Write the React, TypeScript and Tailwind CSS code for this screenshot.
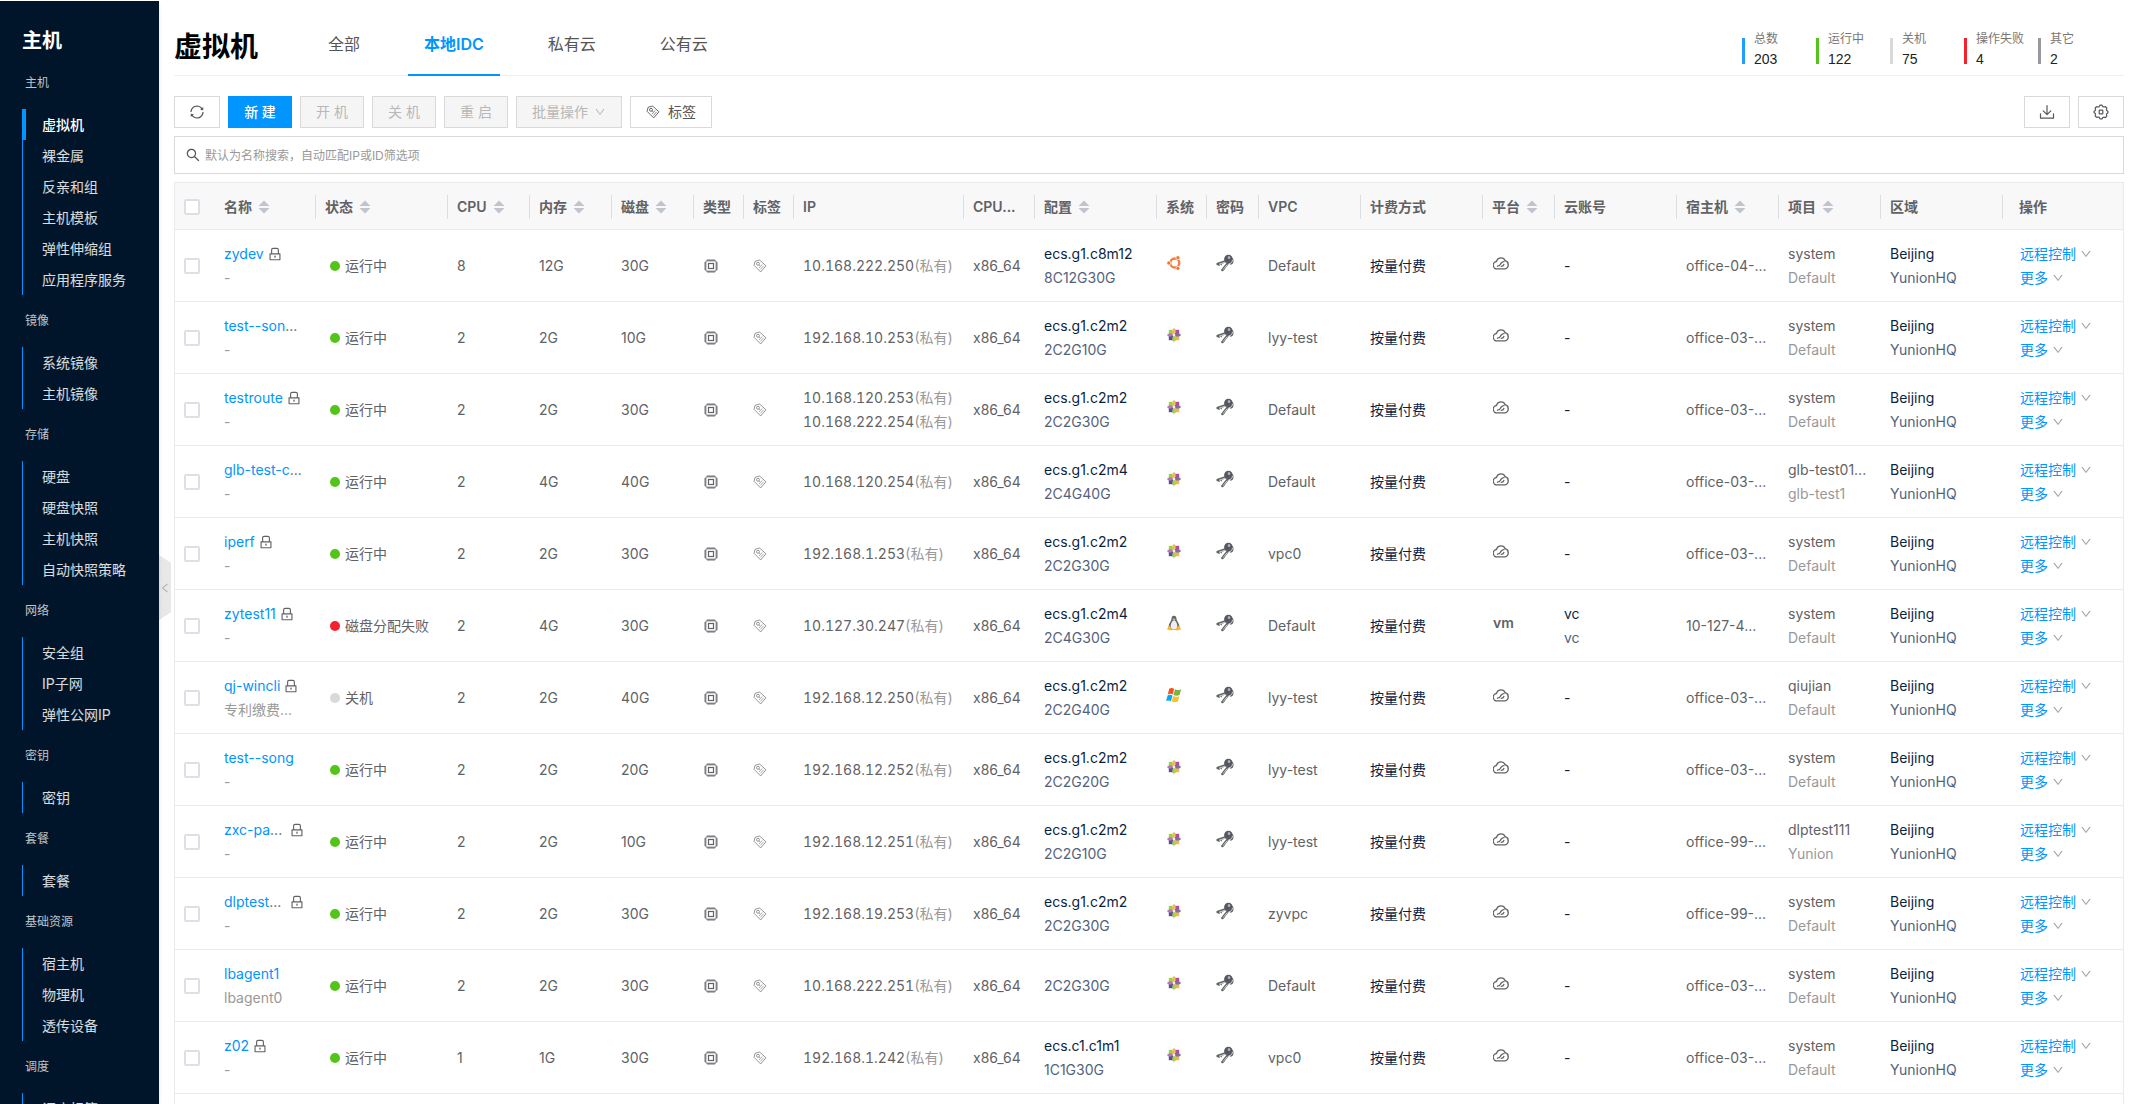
import React from "react";
import { AiOutlineDown, AiOutlineLeft, AiOutlineLock, AiOutlineSearch, AiOutlineSync } from "react-icons/ai";

type Group = { label: string; items: string[] };

const groups: Group[] = [
  { label: "主机", items: ["虚拟机", "裸金属", "反亲和组", "主机模板", "弹性伸缩组", "应用程序服务"] },
  { label: "镜像", items: ["系统镜像", "主机镜像"] },
  { label: "存储", items: ["硬盘", "硬盘快照", "主机快照", "自动快照策略"] },
  { label: "网络", items: ["安全组", "IP子网", "弹性公网IP"] },
  { label: "密钥", items: ["密钥"] },
  { label: "套餐", items: ["套餐"] },
  { label: "基础资源", items: ["宿主机", "物理机", "透传设备"] },
  { label: "调度", items: ["调度标签"] },
];

const stats = [
  { label: "总数", value: 203, bar: "bg-[#1e9fff]" },
  { label: "运行中", value: 122, bar: "bg-[#52c41a]" },
  { label: "关机", value: 75, bar: "bg-[#d9d9d9]" },
  { label: "操作失败", value: 4, bar: "bg-[#f5222d]" },
  { label: "其它", value: 2, bar: "bg-[#98989e]" },
];

type Column = { title: string; width: string; sort?: boolean };

const columns: Column[] = [
  { title: "名称", width: "w-[101px]", sort: true },
  { title: "状态", width: "w-[132px]", sort: true },
  { title: "CPU", width: "w-[82px]", sort: true },
  { title: "内存", width: "w-[82px]", sort: true },
  { title: "磁盘", width: "w-[82px]", sort: true },
  { title: "类型", width: "w-[50px]" },
  { title: "标签", width: "w-[50px]" },
  { title: "IP", width: "w-[170px]" },
  { title: "CPU...", width: "w-[71px]" },
  { title: "配置", width: "w-[122px]", sort: true },
  { title: "系统", width: "w-[50px]" },
  { title: "密码", width: "w-[52px]" },
  { title: "VPC", width: "w-[102px]" },
  { title: "计费方式", width: "w-[122px]" },
  { title: "平台", width: "w-[72px]", sort: true },
  { title: "云账号", width: "w-[122px]" },
  { title: "宿主机", width: "w-[102px]", sort: true },
  { title: "项目", width: "w-[102px]", sort: true },
  { title: "区域", width: "w-[122px]" },
];

type Os = "ubuntu" | "centos" | "linux" | "windows";
type State = "on" | "off" | "fail";
type Vm = {
  name: string;
  locked: boolean;
  note: string;
  state: State;
  cpu: number;
  mem: string;
  disk: string;
  ips: string[];
  sku: string;
  os: Os;
  vpc: string;
  account?: string;
  host: string;
  project: string;
  domain: string;
};

const vms: Vm[] = [
  { name: "zydev", locked: true, note: "-", state: "on", cpu: 8, mem: "12G", disk: "30G", ips: ["10.168.222.250"], sku: "ecs.g1.c8m12", os: "ubuntu", vpc: "Default", host: "office-04-...", project: "system", domain: "Default" },
  { name: "test--son...", locked: false, note: "-", state: "on", cpu: 2, mem: "2G", disk: "10G", ips: ["192.168.10.253"], sku: "ecs.g1.c2m2", os: "centos", vpc: "lyy-test", host: "office-03-...", project: "system", domain: "Default" },
  { name: "testroute", locked: true, note: "-", state: "on", cpu: 2, mem: "2G", disk: "30G", ips: ["10.168.120.253", "10.168.222.254"], sku: "ecs.g1.c2m2", os: "centos", vpc: "Default", host: "office-03-...", project: "system", domain: "Default" },
  { name: "glb-test-c...", locked: false, note: "-", state: "on", cpu: 2, mem: "4G", disk: "40G", ips: ["10.168.120.254"], sku: "ecs.g1.c2m4", os: "centos", vpc: "Default", host: "office-03-...", project: "glb-test01...", domain: "glb-test1" },
  { name: "iperf", locked: true, note: "-", state: "on", cpu: 2, mem: "2G", disk: "30G", ips: ["192.168.1.253"], sku: "ecs.g1.c2m2", os: "centos", vpc: "vpc0", host: "office-03-...", project: "system", domain: "Default" },
  { name: "zytest11", locked: true, note: "-", state: "fail", cpu: 2, mem: "4G", disk: "30G", ips: ["10.127.30.247"], sku: "ecs.g1.c2m4", os: "linux", vpc: "Default", account: "vc", host: "10-127-4...", project: "system", domain: "Default" },
  { name: "qj-wincli", locked: true, note: "专利缴费...", state: "off", cpu: 2, mem: "2G", disk: "40G", ips: ["192.168.12.250"], sku: "ecs.g1.c2m2", os: "windows", vpc: "lyy-test", host: "office-03-...", project: "qiujian", domain: "Default" },
  { name: "test--song", locked: false, note: "-", state: "on", cpu: 2, mem: "2G", disk: "20G", ips: ["192.168.12.252"], sku: "ecs.g1.c2m2", os: "centos", vpc: "lyy-test", host: "office-03-...", project: "system", domain: "Default" },
  { name: "zxc-pa...", locked: true, note: "-", state: "on", cpu: 2, mem: "2G", disk: "10G", ips: ["192.168.12.251"], sku: "ecs.g1.c2m2", os: "centos", vpc: "lyy-test", host: "office-99-...", project: "dlptest111", domain: "Yunion" },
  { name: "dlptest...", locked: true, note: "-", state: "on", cpu: 2, mem: "2G", disk: "30G", ips: ["192.168.19.253"], sku: "ecs.g1.c2m2", os: "centos", vpc: "zyvpc", host: "office-99-...", project: "system", domain: "Default" },
  { name: "lbagent1", locked: false, note: "lbagent0", state: "on", cpu: 2, mem: "2G", disk: "30G", ips: ["10.168.222.251"], sku: "", os: "centos", vpc: "Default", host: "office-03-...", project: "system", domain: "Default" },
  { name: "z02", locked: true, note: "-", state: "on", cpu: 1, mem: "1G", disk: "30G", ips: ["192.168.1.242"], sku: "ecs.c1.c1m1", os: "centos", vpc: "vpc0", host: "office-03-...", project: "system", domain: "Default" },
];

const states: Record<State, { text: string; dot: string }> = {
  on: { text: "运行中", dot: "bg-[#52c41a]" },
  off: { text: "关机", dot: "bg-[#d9d9d9]" },
  fail: { text: "磁盘分配失败", dot: "bg-[#f5222d]" },
};

function TagIcon({ className }: { className: string }) {
  return (
    <svg viewBox="0 0 16 16" fill="none" stroke="currentColor" strokeLinejoin="round" className={className} aria-hidden="true">
      <path d="M1.2 7.2 2.4 2.6 7.6 1.2l7.2 6.6-6 7z" />
      <circle cx="5.7" cy="5.5" r="1.7" />
      <path d="m6.8 10.4 3.8-4.2M8.4 12l3.8-4.2" strokeWidth=".8" />
      <path d="M6.9 6.7 8.2 8" strokeWidth=".8" />
    </svg>
  );
}

function ChipIcon() {
  return (
    <svg viewBox="0 0 16 16" fill="none" stroke="currentColor" className="size-4" aria-hidden="true">
      <rect x="2.8" y="2.8" width="10.4" height="10.4" rx="1" />
      <rect x="5.5" y="5.5" width="5" height="5" strokeWidth="1.2" />
      <path d="M5 1v1.8M7 1v1.8M9 1v1.8M11 1v1.8M5 13.2V15M7 13.2V15M9 13.2V15M11 13.2V15M1 5h1.8M1 7h1.8M1 9h1.8M1 11h1.8M13.2 5H15M13.2 7H15M13.2 9H15M13.2 11H15" strokeWidth=".9" />
    </svg>
  );
}

function KeysIcon() {
  return (
    <svg viewBox="0 0 18 18" className="size-[18px]" aria-hidden="true">
      <path d="M10 7.2 1.6 10M12 9 6.4 16" stroke="#606266" strokeWidth="2.4" strokeLinecap="round" />
      <path d="M3 10v2M5.2 9.2v2M7.2 13.8l1.8 1.4M5.8 15.4l1.6 1.2" stroke="#606266" strokeWidth="1.2" />
      <path d="M9.6 8 3 10.2M11.2 10.6 7 15.8" stroke="#fff" strokeWidth=".7" />
      <path d="M12.500 8.500c1 3 4 2.600 4.700 0s.2-3.400-.8-4.600z" fill="#606266" />
      <circle cx="12.4" cy="5" r="4.300" fill="#55585e" />
      <circle cx="13" cy="3.600" r="1.300" fill="#b9bbbf" />
      <path d="M12.800 9.700c2 0 3.600-1.600 3.700-4" stroke="#fff" strokeWidth=".7" fill="none" />
    </svg>
  );
}

function CloudIcon() {
  return (
    <svg viewBox="0 0 16 14" fill="none" stroke="#606266" strokeWidth="1.300" strokeLinecap="round" strokeLinejoin="round" className="h-3.5 w-4" aria-hidden="true">
      <path d="M4.400 12.900A3.700 3.700 0 0 1 3.500 5.500 4.500 4.500 0 0 1 12.100 4.700a4.200 4.200 0 0 1-.3 8.200H4.400z" />
      <path d="M4.400 10.200c2.200 0 2.600-1.200 3.200-2.300.7-1.300 1.500-2.400 3.300-2.300M8.200 10.300c1.600 0 2.300-.7 2.700-1.800" />
    </svg>
  );
}

function OsIcon({ os }: { os: Os }) {
  if (os === "ubuntu") {
    return (
      <svg viewBox="0 0 16 16" className="size-4" role="img" aria-label="Ubuntu">
        <circle cx="8.800" cy="8" r="4.500" fill="none" stroke="#f47b3c" strokeWidth="2.300" />
        <g fill="#f37329" stroke="#fff" strokeWidth=".7">
          <circle cx="2.800" cy="8" r="2" />
          <circle cx="11.900" cy="2.700" r="2" />
          <circle cx="11.900" cy="13.300" r="2" />
        </g>
      </svg>
    );
  }
  if (os === "linux") {
    return (
      <svg viewBox="0 0 16 16" className="size-4" role="img" aria-label="Linux">
        <path d="M8 .8c-1.900 0-2.600 1.400-2.500 3.300.1 1.800-2.900 4.400-2.900 7.400 0 2.200 2.400 3.300 5.400 3.300s5.400-1.100 5.400-3.300c0-3-3-5.600-2.900-7.400C10.600 2.200 9.900.8 8 .8z" fill="#5f6469" />
        <path d="M8 5.200c-1.600 0-3.400 3.400-3.400 5.900S6 14.600 8 14.600s3.400-1 3.400-3.500S9.600 5.200 8 5.200z" fill="#eceff1" />
        <path d="M6.400 4.200 8 3.300l1.600.9L8 5.500z" fill="#f5b921" />
        <path d="M1 14.200 3 10.600l3.300 3.200c.2 1-.6 1.800-1.600 1.600zM15 14.200 13 10.600l-3.300 3.200c-.2 1 .6 1.800 1.600 1.600z" fill="#f9b52b" />
      </svg>
    );
  }
  if (os === "windows") {
    return (
      <svg viewBox="0 0 16 16" className="size-4" role="img" aria-label="Windows">
        <path d="M3.200 1.700c1.700-.9 3.300-.9 4.900.1L6.700 7.600c-1.600-1-3.200-1-4.900-.1z" fill="#f4511e" />
        <path d="M8.900 2.300c1.700 1 4 1 6.200-.1l-1.500 5.900c-2 1-4.300 1-6.100 0z" fill="#7cb342" />
        <path d="M1.600 8.400c1.600-.9 3.300-.9 4.900.1L5 14.200c-1.600-1-3.300-1-4.900-.1z" fill="#03a9f4" />
        <path d="M7.200 9c1.700 1 4.100 1 6.200-.1L12 14.600c-2.100 1-4.500 1-6.200 0z" fill="#fbc02d" />
      </svg>
    );
  }
  return (
    <svg viewBox="0 0 16 16" className="size-4" role="img" aria-label="CentOS">
      <path d="M2.800 2.800h4.500v4.500H2.800z" fill="#9dd04a" />
      <path d="M8.700 2.800h4.500v4.500H8.700z" fill="#a9509a" />
      <path d="M2.800 8.700h4.500v4.500H2.800z" fill="#51509a" />
      <path d="M8.700 8.700h4.500v4.500H8.700z" fill="#f5b04a" />
      <path d="m8 .8 1.600 2v3L8 7.300 6.400 5.800v-3z" fill="#f0c060" />
      <path d="m15.200 8-2-1.600h-3L8.700 8l1.500 1.600h3z" fill="#7d6fae" />
      <path d="m8 15.200-1.600-2v-3L8 8.700l1.600 1.500v3z" fill="#a8d050" />
      <path d="m.8 8 2-1.600h3L7.300 8 5.800 9.600h-3z" fill="#b878ab" />
    </svg>
  );
}

function DownloadIcon() {
  return (
    <svg viewBox="0 0 16 16" fill="none" stroke="#55585e" strokeWidth="1.200" strokeLinecap="round" strokeLinejoin="round" className="size-4" aria-hidden="true">
      <path d="M8 1.500v9M4.200 6.900 8 10.600l3.800-3.700M1.500 9.800v4.400h13V9.800" />
    </svg>
  );
}

function GearIcon() {
  return (
    <svg viewBox="0 0 16 16" fill="none" stroke="#55585e" strokeWidth="1.200" strokeLinejoin="round" className="size-4" aria-hidden="true">
      <path d="M6.200 2.600 7 1.200h2l.8 1.400 1 .4 1.600-.4 1.400 1.400-.4 1.600.4 1 1.100.6v1.800l-1.100.6-.4 1 .4 1.600-1.400 1.400-1.600-.4-1 .4L9 14.800H7l-.8-1.400-1-.4-1.600.4L2.200 12l.4-1.600-.4-1L1.100 8.800V7.200l1.100-.6.4-1L2.200 4l1.400-1.400 1.600.4z" />
      <rect x="6.200" y="6.200" width="3.600" height="3.600" rx=".6" />
    </svg>
  );
}

function SortIcon() {
  return (
    <svg viewBox="0 0 12 14" fill="#c0c4cc" className="h-3.5 w-3 shrink-0" aria-hidden="true">
      <path d="M6 .5 11.500 6H.5zM6 13.500 11.500 8H.5z" />
    </svg>
  );
}

function Check({ label }: { label: string }) {
  return (
    <input
      type="checkbox"
      aria-label={label}
      className="block size-4 appearance-none rounded-xs border-2 border-[#dcdfe6] bg-white checked:border-[#0095ff] checked:bg-[#0095ff]"
    />
  );
}

function Sidebar() {
  return (
    <aside className="z-20 w-[159px] shrink-0 overflow-hidden bg-[#001529] shadow-md">
      <h2 className="pt-[26px] pb-0.5 pl-[22px] text-xl font-bold text-white">主机</h2>
      <nav>
        {groups.map((g, gi) => (
          <section key={g.label}>
            <h3 className="pl-[25px] text-xs leading-[52px] text-white/75">{g.label}</h3>
            <ul className="ml-[22px] border-l border-[#0095ff]">
              {g.items.map((item, i) => {
                const active = gi === 0 && i === 0;
                return (
                  <li key={item}>
                    <a
                      href="#"
                      className={
                        active
                          ? "block border-l-3 border-[#0095ff] pl-4 text-sm leading-[31px] font-medium text-white"
                          : "block pl-[19px] text-sm leading-[31px] text-white/85"
                      }
                    >
                      {item}
                    </a>
                  </li>
                );
              })}
            </ul>
          </section>
        ))}
      </nav>
    </aside>
  );
}

function PageHeader() {
  const tabs = ["全部", "本地IDC", "私有云", "公有云"];
  return (
    <header className="flex h-[75px] items-stretch border-b border-[#f0f0f0]">
      <h1 className="mr-[54px] self-center pt-[18px] text-[28px] leading-9 font-bold text-black">虚拟机</h1>
      <nav className="-mb-px flex gap-8 text-base">
        {tabs.map((t) =>
          t === "本地IDC" ? (
            <a key={t} href="#" aria-current="page" className="border-b-2 border-[#0095ff] px-4 pt-[31px] font-semibold text-[#0095ff]">
              {t}
            </a>
          ) : (
            <a key={t} href="#" className="border-b-2 border-transparent px-4 pt-[31px] text-[#555]">
              {t}
            </a>
          ),
        )}
      </nav>
      <dl className="mr-3 ml-auto flex pt-7">
        {stats.map((s) => (
          <div key={s.label} className="flex w-[74px] gap-[9px]">
            <span className={`mt-[9px] h-[26px] w-[3px] shrink-0 ${s.bar}`} />
            <div className="whitespace-nowrap">
              <dt className="text-xs leading-5 text-[#777]">{s.label}</dt>
              <dd className="font-['Liberation_Sans',sans-serif] text-sm leading-5 text-[#222]">{s.value}</dd>
            </div>
          </div>
        ))}
      </dl>
    </header>
  );
}

function Toolbar() {
  const off = "h-8 w-16 border border-[#d9d9d9] bg-[#f5f5f5] text-[#b8b8b8]";
  return (
    <div className="mt-5 flex gap-2 text-sm">
      <button aria-label="刷新" className="flex h-8 w-[46px] items-center justify-center border border-[#d9d9d9] text-[#555]">
        <AiOutlineSync className="size-4" />
      </button>
      <button className="h-8 w-16 bg-[#0095ff] font-medium text-white">新 建</button>
      <button disabled className={off}>开 机</button>
      <button disabled className={off}>关 机</button>
      <button disabled className={off}>重 启</button>
      <button disabled className="flex h-8 w-[106px] items-center justify-center gap-1.5 border border-[#d9d9d9] bg-[#f5f5f5] text-[#b8b8b8]">
        批量操作
        <AiOutlineDown className="size-3" />
      </button>
      <button className="flex h-8 w-[82px] items-center justify-center gap-2 border border-[#d9d9d9] text-[#555]">
        <TagIcon className="size-3.5" />
        标签
      </button>
      <button aria-label="导出" className="ml-auto flex h-8 w-[46px] items-center justify-center border border-[#d9d9d9]">
        <DownloadIcon />
      </button>
      <button aria-label="设置" className="flex h-8 w-[46px] items-center justify-center border border-[#d9d9d9]">
        <GearIcon />
      </button>
    </div>
  );
}

function NameText({ name }: { name: string }) {
  const cut = name.endsWith("...");
  return (
    <>
      <a href="#" className="text-[#0095ff]">{cut ? name.slice(0, -3) : name}</a>
      {cut && "..."}
    </>
  );
}

function Row({ vm }: { vm: Vm }) {
  const state = states[vm.state];
  const size = `${vm.cpu}C${vm.mem}${vm.disk}`;
  return (
    <tr className="h-[72px] border-b border-[#e8eaec]">
      <td className="pl-[9px]">
        <Check label={vm.name} />
      </td>
      <td className="pl-[9px]">
        <div className="flex items-center gap-[3px]">
          <span className={vm.locked && vm.name.endsWith("...") ? "w-[62px]" : ""}>
            <NameText name={vm.name} />
          </span>
          {vm.locked && <AiOutlineLock className="size-4 shrink-0" />}
        </div>
        <div className="text-[#999]">{vm.note}</div>
      </td>
      <td className="pl-3.5">
        <div className="flex items-center gap-[5px]">
          <span className={`size-2.5 rounded-full ${state.dot}`} />
          {state.text}
        </div>
      </td>
      <td className="pl-[9px]">{vm.cpu}</td>
      <td className="pl-[9px]">{vm.mem}</td>
      <td className="pl-[9px]">{vm.disk}</td>
      <td className="pl-[9px]"><ChipIcon /></td>
      <td className="pl-[9px]"><TagIcon className="size-3.5 text-[#888]" /></td>
      <td className="pl-[9px] tabular-nums">
        {vm.ips.map((ip) => (
          <div key={ip}>
            {ip}
            <span className="text-[#999]">(私有)</span>
          </div>
        ))}
      </td>
      <td className="pl-[9px]">x86_64</td>
      <td className="pl-[9px]">
        {vm.sku && <div className="text-[#0a1f44]">{vm.sku}</div>}
        <div className="text-[#53627c]">{size}</div>
      </td>
      <td className="pb-1.5 pl-[9px]"><OsIcon os={vm.os} /></td>
      <td className="pb-1.5 pl-[9px]">
        <button aria-label="查看密码" className="block"><KeysIcon /></button>
      </td>
      <td className="pl-[9px]">{vm.vpc}</td>
      <td className="pl-[9px] text-[#0a1f44]">按量付费</td>
      <td className="pb-1.5 pl-2.5">
        {vm.account ? <span className="font-semibold">vm</span> : <CloudIcon />}
      </td>
      <td className="pl-[9px] text-[#0a1f44]">
        {vm.account ? (
          <>
            <div>{vm.account}</div>
            <div className="text-[#53627c]">{vm.account}</div>
          </>
        ) : (
          "-"
        )}
      </td>
      <td className="pl-[9px]">{vm.host}</td>
      <td className="pl-[9px]">
        <div>{vm.project}</div>
        <div className="text-[#999]">{vm.domain}</div>
      </td>
      <td className="pl-[9px]">
        <div className="text-[#0a1f44]">Beijing</div>
        <div className="text-[#53627c]">YunionHQ</div>
      </td>
      <td className="pl-[17px] text-[#0095ff]">
        {["远程控制", "更多"].map((t) => (
          <button key={t} className="flex items-center gap-1">
            {t}
            <AiOutlineDown className="size-3 text-[#999]" />
          </button>
        ))}
      </td>
    </tr>
  );
}

function VmTable() {
  return (
    <div className="mt-2 flex-1 border border-b-0 border-[#e8eaec]">
      <table className="w-full table-fixed text-left text-sm leading-6 whitespace-nowrap text-[#606266] [&_td]:pt-0.5 [&_th]:pt-0.5">
        <colgroup>
          <col className="w-10" />
          {columns.map((c) => (
            <col key={c.title} className={c.width} />
          ))}
          <col className="w-[120px]" />
        </colgroup>
        <thead>
          <tr className="h-[46px] border-b border-[#e8eaec] bg-[#f8f8f9]">
            <th className="pl-[9px]">
              <Check label="全选" />
            </th>
            {columns.map((c) => (
              <th key={c.title} className="font-semibold">
                <div className="flex h-6 items-center gap-1.5 border-r border-[#dcdee2] pl-[9px]">
                  {c.title}
                  {c.sort && <SortIcon />}
                </div>
              </th>
            ))}
            <th className="pl-4 font-semibold">操作</th>
          </tr>
        </thead>
        <tbody>
          {vms.map((vm) => (
            <Row key={vm.name} vm={vm} />
          ))}
        </tbody>
      </table>
    </div>
  );
}

export default function App() {
  return (
    <div className="flex h-screen flex-col overflow-hidden bg-white font-['Inter','Noto_Sans_CJK_SC',sans-serif]">
      <div className="z-10 h-px shrink-0 bg-white shadow-md" />
      <div className="flex min-h-0 flex-1">
        <Sidebar />
        <div className="flex w-[15px] shrink-0 items-center">
          <button
            aria-label="收起菜单"
            className="mt-[70px] flex h-[65px] w-3 items-center justify-center bg-[#e8e8e8] text-[#aaa] [clip-path:polygon(0_0,100%_12%,100%_88%,0_100%)]"
          >
            <AiOutlineLeft className="size-3" />
          </button>
        </div>
        <main className="mr-[13px] flex min-w-0 flex-1 flex-col">
          <PageHeader />
          <Toolbar />
          <label className="mt-2 flex h-[38px] shrink-0 items-center gap-1 border border-[#d9d9d9] px-2.5">
            <AiOutlineSearch className="size-4 text-[#555]" />
            <input
              type="text"
              aria-label="搜索"
              placeholder="默认为名称搜索，自动匹配IP或ID筛选项"
              className="flex-1 pt-px text-xs outline-none placeholder:text-[#999]"
            />
          </label>
          <VmTable />
        </main>
      </div>
    </div>
  );
}
